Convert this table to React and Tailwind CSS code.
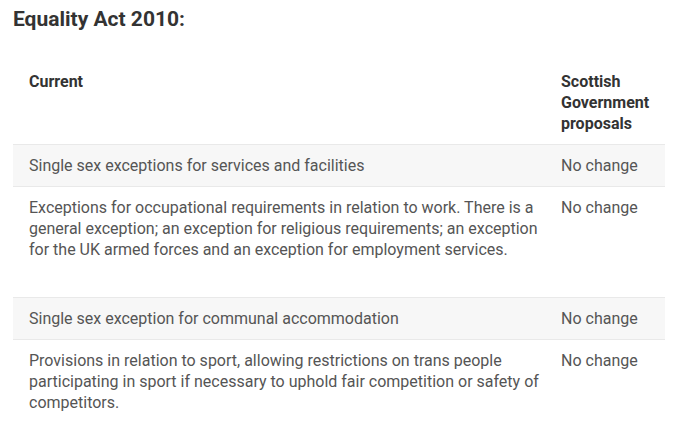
const ROWS = [
  { current: 'Single sex exceptions for services and facilities', proposal: 'No change', shaded: true },
  {
    current:
      'Exceptions for occupational requirements in relation to work. There is a general exception; an exception for religious requirements; an exception for the UK armed forces and an exception for employment services.',
    proposal: 'No change',
    extra: true,
  },
  { current: 'Single sex exception for communal accommodation', proposal: 'No change', shaded: true },
  {
    current:
      'Provisions in relation to sport, allowing restrictions on trans people participating in sport if necessary to uphold fair competition or safety of competitors.',
    proposal: 'No change',
  },
];

export default function App() {
  return (
    <div className="min-h-screen bg-white px-[13px] pt-[5px] font-['Roboto',sans-serif] text-[16px] leading-[21px] text-[#555]">
      <h2 className="text-[21px] font-bold leading-[28px] text-[#333]">Equality Act 2010:</h2>

      <table className="mt-[28px] w-[652px] table-fixed border-collapse">
        <thead>
          <tr className="border-b border-[#e9e9e9]">
            <th className="w-[532px] py-[10px] pl-4 pr-1 text-left align-top font-bold text-[#333]">Current</th>
            <th className="py-[10px] pl-4 pr-1 text-left align-top font-bold text-[#333]">
              Scottish Government proposals
            </th>
          </tr>
        </thead>
        <tbody>
          {ROWS.map((r, i) => (
            <tr
              key={i}
              className={`${i < ROWS.length - 1 ? 'border-b border-[#e9e9e9]' : ''} ${r.shaded ? 'bg-[#f7f7f7]' : ''}`}
            >
              <td className={`pt-[10px] pl-4 pr-1 align-top ${r.extra ? 'pb-[37px]' : 'pb-[10px]'}`}>{r.current}</td>
              <td className="pt-[10px] pl-4 pr-1 align-top">{r.proposal}</td>
            </tr>
          ))}
        </tbody>
      </table>
    </div>
  );
}
